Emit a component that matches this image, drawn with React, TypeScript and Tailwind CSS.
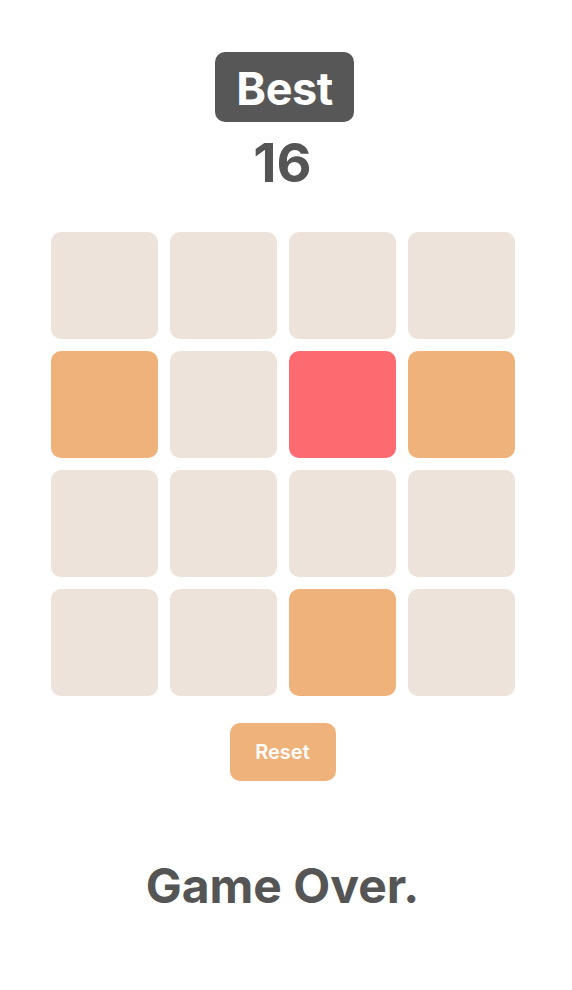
const EMPTY = 'bg-[#ede3db]';
const ORANGE = 'bg-[#f0b27b]';
const RED = 'bg-[#fd6b70]';

const tiles: string[] = [
  EMPTY, EMPTY, EMPTY, EMPTY,
  ORANGE, EMPTY, RED, ORANGE,
  EMPTY, EMPTY, EMPTY, EMPTY,
  EMPTY, EMPTY, ORANGE, EMPTY,
];

export default function App() {
  return (
    <div className="min-h-[990px] bg-white">
      <div
        className="w-[565px] flex flex-col items-center"
        style={{ fontFamily: 'Inter, "Noto Sans", sans-serif' }}
      >
        {/* Best score */}
        <div className="mt-[52px] ml-[4px] w-[139px] h-[70px] rounded-[10px] bg-[#575757] flex justify-center pt-[14px]">
          <span className="text-white font-bold text-[45px] leading-none tracking-[-0.5px]">Best</span>
        </div>
        <div className="mt-[14px] text-[#555555] font-bold text-[54px] leading-none">16</div>

        {/* Board */}
        <div className="mt-[42px] grid grid-cols-4 gap-[12px]">
          {tiles.map((c, i) => (
            <div key={i} className={`${c} w-[107px] h-[107px] rounded-[10px]`} />
          ))}
        </div>

        <button className="mt-[27px] w-[106px] h-[58px] rounded-[10px] bg-[#f0b27b] text-white font-semibold text-[20px]">
          Reset
        </button>

        <div className="mt-[81px] text-[#555555] font-bold text-[48px] leading-none">Game Over.</div>
      </div>
    </div>
  );
}
